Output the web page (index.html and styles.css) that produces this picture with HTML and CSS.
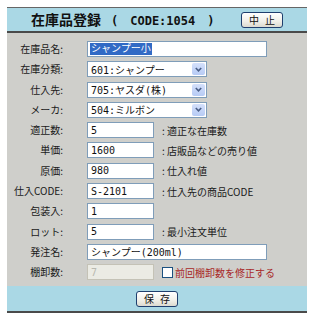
FILE: index.html
```html
<!DOCTYPE html>
<html lang="ja">

<head>
  <meta charset="UTF-8">
  <title>在庫品登録</title>
  <link rel="stylesheet" href="styles.css">
</head>

<body>
  <div class="panel">
    <div class="head">
      <h1>在庫品登録<span class="code">(　CODE:1054　)</span></h1>
      <button type="button" class="btn">中 止</button>
    </div>

    <div class="form">
      <label>在庫品名:</label>
      <div class="cell"><div class="text long"><span class="sel">シャンプー小</span></div></div>

      <label>在庫分類:</label>
      <div class="cell">
        <div class="combo"><span>601:シャンプー</span><i class="arrow"><svg width="7" height="5" viewBox="0 0 7 5"><polyline points="0.8,1 3.5,3.8 6.2,1" /></svg></i></div>
      </div>

      <label>仕入先:</label>
      <div class="cell">
        <div class="combo"><span>705:ヤスダ(株)</span><i class="arrow"><svg width="7" height="5" viewBox="0 0 7 5"><polyline points="0.8,1 3.5,3.8 6.2,1" /></svg></i></div>
      </div>

      <label>メーカ:</label>
      <div class="cell">
        <div class="combo"><span>504:ミルボン</span><i class="arrow"><svg width="7" height="5" viewBox="0 0 7 5"><polyline points="0.8,1 3.5,3.8 6.2,1" /></svg></i></div>
      </div>

      <label>適正数:</label>
      <div class="cell"><input class="short" type="text" value="5"><span class="note">: 適正な在庫数</span></div>

      <label>単価:</label>
      <div class="cell"><input class="short" type="text" value="1600"><span class="note">: 店販品などの売り値</span></div>

      <label>原価:</label>
      <div class="cell"><input class="short" type="text" value="980"><span class="note">: 仕入れ値</span></div>

      <label>仕入CODE:</label>
      <div class="cell"><input class="short" type="text" value="S-2101"><span class="note">: 仕入先の商品CODE</span></div>

      <label>包装入:</label>
      <div class="cell"><input class="short" type="text" value="1"></div>

      <label>ロット:</label>
      <div class="cell"><input class="short" type="text" value="5"><span class="note">: 最小注文単位</span></div>

      <label>発注名:</label>
      <div class="cell"><input class="long" type="text" value="シャンプー(200ml)"></div>

      <label>棚卸数:</label>
      <div class="cell">
        <input class="short" type="text" value="7" disabled>
        <span class="fix"><i class="check"></i>前回棚卸数を修正する</span>
      </div>
    </div>

    <div class="foot">
      <button type="button" class="btn">保 存</button>
    </div>
  </div>
</body>

</html>
```

FILE: styles.css
```css
body {
  margin: 0;
  background: #fff;
  font-family: "DejaVu Sans Mono", "Noto Sans CJK JP", monospace;
  font-size: 10px;
  color: #1a1a1a;
}

.panel {
  width: 300px;
  margin: 7px 0 0 7px;
  border-top: 1px solid #666;
}

.head {
  height: 23px;
  background: #aad8e5;
  border-bottom: 2px solid #4a4a4a;
  display: flex;
  align-items: center;
  justify-content: space-between;
  padding: 0 24px 0 24px;
}

h1 {
  margin: 0;
  font-size: 14px;
  font-weight: bold;
  color: #111;
  line-height: 1;
}

h1 .code {
  font-size: 12px;
  margin-left: 10px;
}

.btn {
  width: 42px;
  height: 16px;
  padding: 0 0 0 2px;
  font-family: "Noto Sans CJK JP", sans-serif;
  font-size: 10px;
  line-height: 1;
  letter-spacing: 2px;
  white-space: pre;
  color: #111;
  background: linear-gradient(#ffffff, #f0efe8 60%, #dcdad0);
  border: 1px solid #1f3f6e;
  border-radius: 3px;
}

.form {
  background: #cfcfcb;
  padding: 8px 0 6px;
  display: grid;
  grid-template-columns: 56px 1fr;
  column-gap: 24px;
  row-gap: 4.3px;
  align-items: center;
}

label {
  text-align: right;
  font-family: "Noto Sans CJK JP", sans-serif;
  font-size: 10px;
  line-height: 16px;
  white-space: nowrap;
}

.cell {
  display: flex;
  align-items: center;
  height: 16px;
}

input,
.text,
.combo {
  box-sizing: border-box;
  height: 16px;
  margin: 0;
  padding: 0 3px;
  border: 1px solid #7f9db9;
  background: #fff;
  font-family: "DejaVu Sans Mono", "Noto Sans CJK JP", monospace;
  font-size: 10px;
  color: #111;
  outline: none;
}

.long {
  width: 180px;
}

.short {
  width: 67px;
}

.text {
  display: flex;
  align-items: center;
  padding-left: 2px;
}

.sel {
  background: #316ac5;
  color: #fff;
  line-height: 12px;
  padding: 0 1px;
}

.combo {
  width: 120px;
  display: flex;
  align-items: center;
  justify-content: space-between;
  padding: 0 1px 0 3px;
}

.arrow {
  width: 13px;
  height: 12px;
  border-radius: 2px;
  background: linear-gradient(#d4e0fb, #b7cbf5);
  display: flex;
  align-items: center;
  justify-content: center;
}

.arrow polyline {
  fill: none;
  stroke: #4b5f88;
  stroke-width: 1.6;
}

.note {
  margin-left: 8px;
  font-family: "Noto Sans CJK JP", sans-serif;
  white-space: nowrap;
}

input:disabled {
  background: #ebebe4;
  border-color: #c4c2b6;
  color: #b8b8b0;
}

.fix {
  margin-left: 8px;
  display: flex;
  align-items: center;
  font-family: "Noto Sans CJK JP", sans-serif;
  color: #a82828;
  white-space: nowrap;
}

.check {
  box-sizing: border-box;
  width: 11px;
  height: 11px;
  margin-right: 2px;
  background: #fff;
  border: 1px solid #1c5180;
}

.foot {
  height: 25px;
  background: #aad8e5;
  border-bottom: 2px solid #4a4a4a;
  display: flex;
  align-items: center;
  justify-content: center;
}
```
